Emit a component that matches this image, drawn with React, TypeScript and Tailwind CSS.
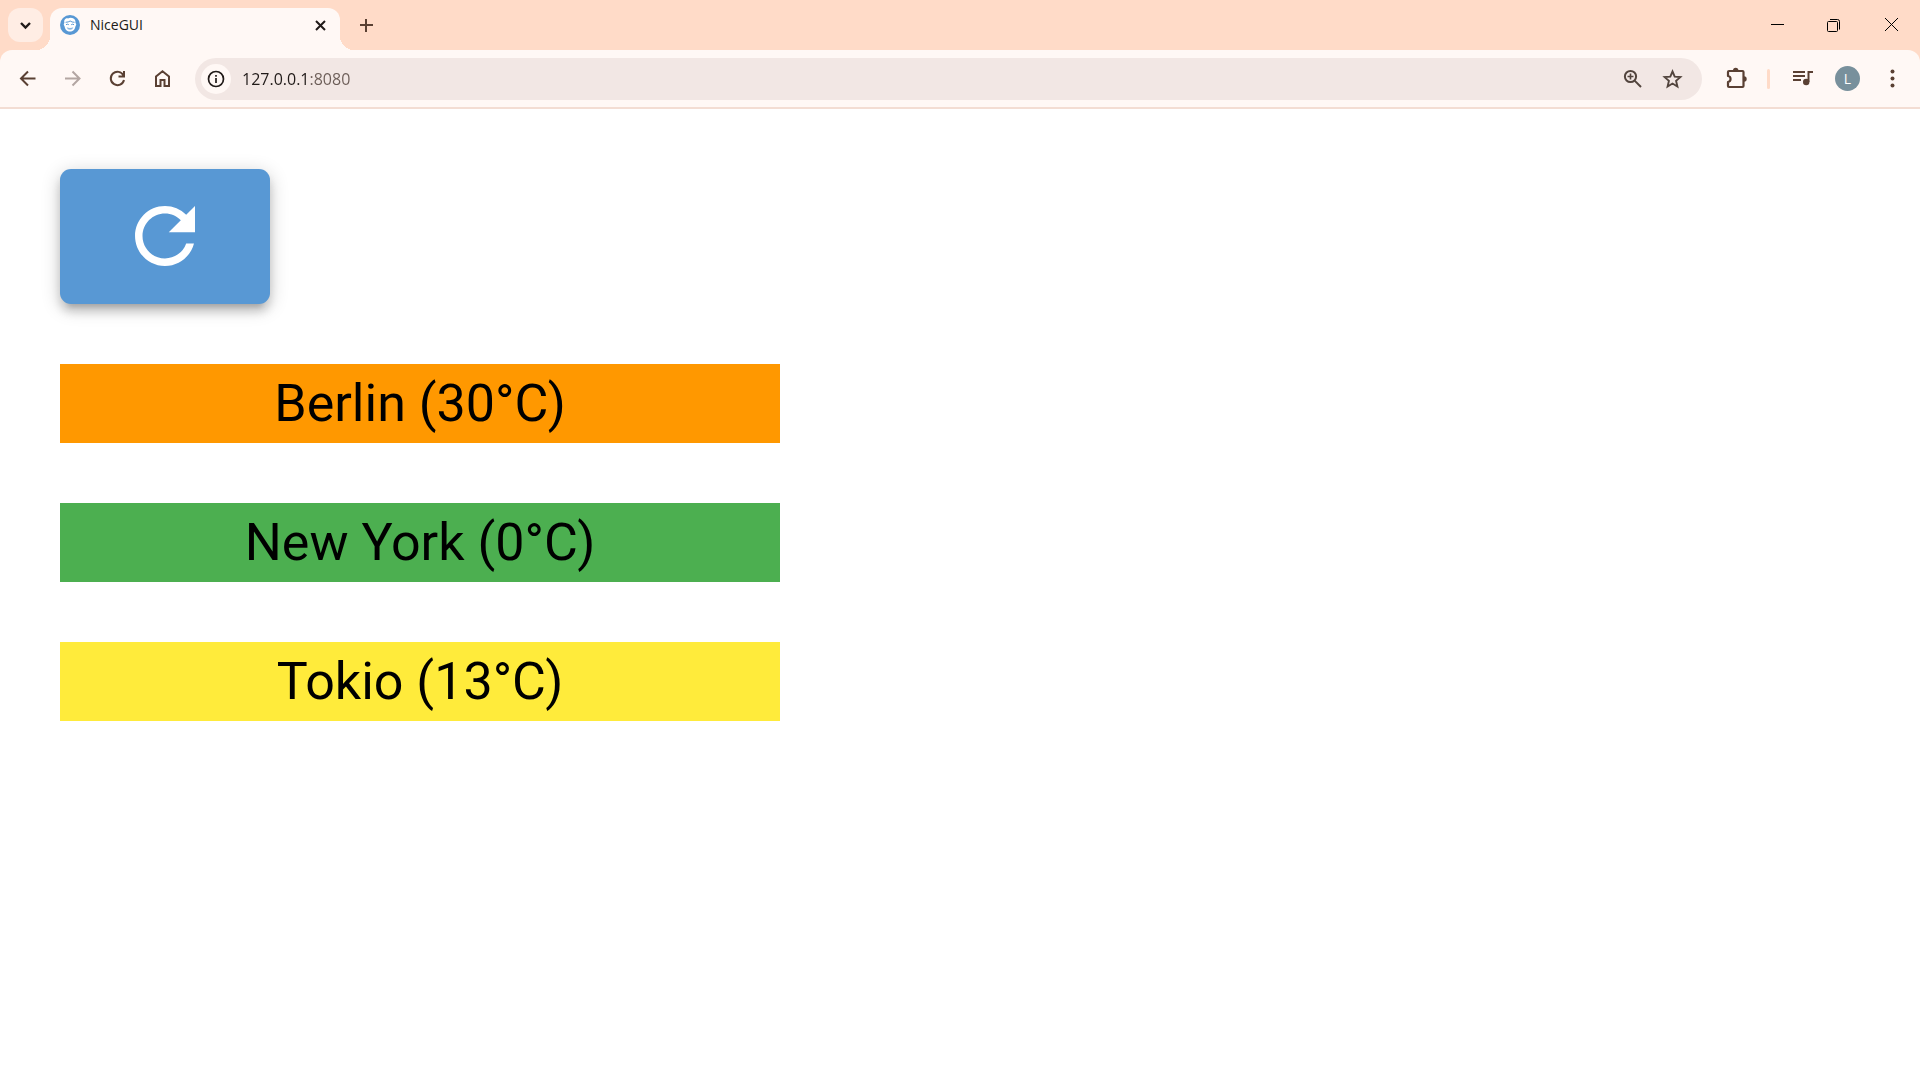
import React from "react";
import { MdRefresh } from "react-icons/md";

const cities = [
  { name: "Berlin", temp: 30, color: "bg-[#ff9800]" },
  { name: "New York", temp: 0, color: "bg-[#4caf50]" },
  { name: "Tokio", temp: 13, color: "bg-[#ffeb3b]" },
];

function Icon({ children }: { children: React.ReactNode }) {
  return (
    <svg
      className="size-[25px]"
      viewBox="0 0 25 25"
      fill="none"
      stroke="currentColor"
      strokeWidth="2"
      aria-hidden="true"
    >
      {children}
    </svg>
  );
}

function ToolButton({
  label,
  disabled,
  children,
}: {
  label: string;
  disabled?: boolean;
  children: React.ReactNode;
}) {
  return (
    <button
      type="button"
      aria-label={label}
      disabled={disabled}
      className="flex h-[42px] w-[45px] shrink-0 items-center justify-center text-[#5a4033] disabled:text-[#b3a6a2]"
    >
      {children}
    </button>
  );
}

function Favicon() {
  return (
    <svg className="size-5 shrink-0" viewBox="0 0 20 20" aria-hidden="true">
      <circle cx="10" cy="10" r="10" fill="#5898d4" />
      <path
        d="M4.4 7.6C3.6 4.6 6 2.8 8 3.4c2-1.2 4.2-.6 5-.2 1.8.8 2.8 2.4 2.4 4.4l.9 1.8-.9 2c-.4 3-2.6 5.2-5.4 5.2s-5-2.200-5.400-5.200l-.9-2z"
        fill="#fff"
      />
      <path d="M5.600 7.300c2-.1 3.400-.5 4.600-1.300 1.200.9 2.600 1.300 4.300 1.300" fill="none" stroke="#5898d4" strokeWidth="1" />
      <path d="M6 9.700q1.400-1 2.800 0M11.200 9.700q1.400-1 2.800 0" fill="none" stroke="#5898d4" strokeWidth="1" />
      <path d="M6.600 12.200q3.400 1.400 6.800 0q-.8 2.600-3.400 2.600t-3.400-2.600z" fill="#8db9e2" />
    </svg>
  );
}

function TabStrip() {
  return (
    <div className="flex h-[50px] items-start pt-2 pl-2">
      <button
        type="button"
        aria-label="Search tabs"
        className="flex h-[34px] w-[35px] shrink-0 items-center justify-center rounded-xl bg-[#ffede4] text-[#201a18]"
      >
        <svg className="size-[25px]" viewBox="0 0 25 25" fill="none" stroke="currentColor" strokeWidth="2.400" aria-hidden="true">
          <path d="M8 10l4.500 4.500 4.500-4.500" />
        </svg>
      </button>
      <div className="relative ml-[7px] flex h-[42px] w-[290px] items-center rounded-t-xl bg-[#fff8f5] pr-[7px] pb-2 pl-[10px] before:absolute before:bottom-0 before:-left-[14px] before:size-[14px] before:bg-[radial-gradient(circle_at_0_0,transparent_14px,#fff8f5_14px)] after:absolute after:-right-[14px] after:bottom-0 after:size-[14px] after:bg-[radial-gradient(circle_at_100%_0,transparent_14px,#fff8f5_14px)]">
        <Favicon />
        <span className="ml-[10px] flex-1 text-sm text-[#201a18]">NiceGUI</span>
        <button type="button" aria-label="Close tab" className="flex size-[26px] items-center justify-center text-[#201a18]">
          <Icon>
            <path d="M8 8l9 9M17 8l-9 9" />
          </Icon>
        </button>
      </div>
      <button
        type="button"
        aria-label="New tab"
        className="ml-[9px] flex h-[34px] w-[34px] items-center justify-center text-[#5a4033]"
      >
        <Icon>
          <path d="M12 6v13M6 12h13" />
        </Icon>
      </button>
      <div className="ml-auto flex text-black">
        <button type="button" aria-label="Minimize" className="flex h-8 w-[57px] items-center justify-center">
          <svg className="size-[15px]" viewBox="0 0 15 15" stroke="currentColor" aria-hidden="true">
            <path d="M1 7.500h13" />
          </svg>
        </button>
        <button type="button" aria-label="Restore" className="flex h-8 w-[57px] items-center justify-center">
          <svg className="size-[15px]" viewBox="0 0 15 15" fill="none" stroke="currentColor" aria-hidden="true">
            <rect x="0.500" y="4.500" width="10" height="10" rx="1" />
            <path d="M3 2.500h7.500q2 0 2 2V12.500" />
          </svg>
        </button>
        <button type="button" aria-label="Close" className="flex h-8 w-[57px] items-center justify-center">
          <svg className="size-[15px]" viewBox="0 0 15 15" stroke="currentColor" aria-hidden="true">
            <path d="M1 1l13 13M14 1L1 14" />
          </svg>
        </button>
      </div>
    </div>
  );
}

function Toolbar() {
  return (
    <div className="flex h-[59px] items-center rounded-t-xl border-b-2 border-[#f3ddd3] bg-[#fff8f5] px-[5px]">
      <ToolButton label="Back">
        <Icon>
          <path d="M20.500 12.500H6.500M13 5.500l-7 7 7 7" />
        </Icon>
      </ToolButton>
      <ToolButton label="Forward" disabled>
        <Icon>
          <path d="M5 12.500h14M12.500 5.500l7 7-7 7" />
        </Icon>
      </ToolButton>
      <ToolButton label="Reload">
        <Icon>
          <path d="M18.500 9.500A6.700 6.700 0 1 0 19 14M19 5v5.500h-5.500" />
        </Icon>
      </ToolButton>
      <ToolButton label="Home">
        <Icon>
          <path d="M6 20V10.500l6.500-5.300 6.500 5.300V20h-4.500v-6h-4v6z" />
        </Icon>
      </ToolButton>
      <div className="ml-[10px] flex h-[42px] min-w-0 flex-1 items-center rounded-full bg-[#f2e7e4] pr-[10px] pl-[6px]">
        <button
          type="button"
          aria-label="View site information"
          className="flex size-[30px] shrink-0 items-center justify-center rounded-full bg-[#fff8f5] text-[#201a18]"
        >
          <svg className="size-[18px]" viewBox="0 0 18 18" fill="none" stroke="currentColor" strokeWidth="1.700" aria-hidden="true">
            <circle cx="9" cy="9" r="7.500" />
            <path d="M9 8v5M9 5v1.800" />
          </svg>
        </button>
        <input
          aria-label="Address"
          defaultValue="127.0.0.1:8080"
          className="ml-[11px] min-w-0 flex-1 bg-[linear-gradient(to_right,#201a18_68px,#6b5c56_68px)] bg-clip-text text-base text-transparent outline-none"
        />
        <button type="button" aria-label="Zoom" className="flex h-10 w-10 shrink-0 items-center justify-center text-[#52443d]">
          <Icon>
            <circle cx="10.500" cy="10.500" r="5.600" />
            <path d="M14.600 14.600l6.400 6.400" />
            <path d="M10.500 7.500v6M7.500 10.500h6" strokeWidth="1.600" />
          </Icon>
        </button>
        <button type="button" aria-label="Bookmark this tab" className="flex h-10 w-10 shrink-0 items-center justify-center text-[#52443d]">
          <svg className="size-[25px]" viewBox="0 0 25 25" fill="none" stroke="currentColor" strokeWidth="1.900" aria-hidden="true">
            <path d="M12.500 5.500l2.200 5.100 5.700.5-4.300 3.800 1.300 5.600-4.900-3-4.900 3 1.300-5.600-4.300-3.800 5.700-.5z" />
          </svg>
        </button>
      </div>
      <div className="ml-[11px] flex">
        <ToolButton label="Extensions">
          <svg className="size-[25px]" viewBox="0 0 25 25" fill="none" stroke="currentColor" strokeWidth="2.200" aria-hidden="true">
            <path d="M5 6q0-1 1-1h13.500q1 0 1 1v14q0 1-1 1H6q-1 0-1-1v-4c3.400-.6 3.400-5.400 0-6z" strokeLinejoin="round" />
            <path d="M10 4.500a2.700 2.700 0 0 1 5.400 0zM21 10.300a2.700 2.700 0 0 1 0 5.400z" fill="currentColor" stroke="none" />
          </svg>
        </ToolButton>
      </div>
      <div className="mr-[10px] ml-[9px] h-5 w-[3px] rounded-full bg-[#ffdbc8]" />
      <ToolButton label="Media controls">
        <Icon>
          <path d="M3 6h12M3 10h12M3 14h8" />
          <path d="M18.500 16V6H23" />
          <circle cx="16.200" cy="16" r="3.200" fill="currentColor" stroke="none" />
        </Icon>
      </ToolButton>
      <ToolButton label="Profile">
        <span className="flex size-[25px] items-center justify-center rounded-full bg-[#78909c] text-sm text-white">L</span>
      </ToolButton>
      <ToolButton label="Menu">
        <svg className="size-[25px]" viewBox="0 0 25 25" fill="currentColor" aria-hidden="true">
          <circle cx="12.500" cy="5.500" r="2" />
          <circle cx="12.500" cy="12.500" r="2" />
          <circle cx="12.500" cy="19.500" r="2" />
        </svg>
      </ToolButton>
    </div>
  );
}

export default function App() {
  return (
    <div className="flex min-h-screen flex-col bg-white">
      <header className="bg-[#ffdbc8] font-['Open_Sans','Noto_Sans',sans-serif]">
        <TabStrip />
        <Toolbar />
      </header>
      <main className="flex flex-col items-start gap-[60px] p-[60px] font-['Roboto',sans-serif]">
        <button
          type="button"
          aria-label="Refresh"
          className="flex h-[135px] w-[210px] items-center justify-center rounded-[11px] bg-[#5898d4] pb-[2px] text-white shadow-[0_4px_19px_rgba(0,0,0,0.2),0_8px_8px_rgba(0,0,0,0.14),0_11px_4px_-8px_rgba(0,0,0,0.12)]"
        >
          <MdRefresh className="size-[90px]" />
        </button>
        {cities.map((city) => (
          <div
            key={city.name}
            className={`w-full max-w-[720px] text-center text-[52px] leading-[79px] text-black ${city.color}`}
          >
            {city.name} ({city.temp}°C)
          </div>
        ))}
      </main>
    </div>
  );
}
